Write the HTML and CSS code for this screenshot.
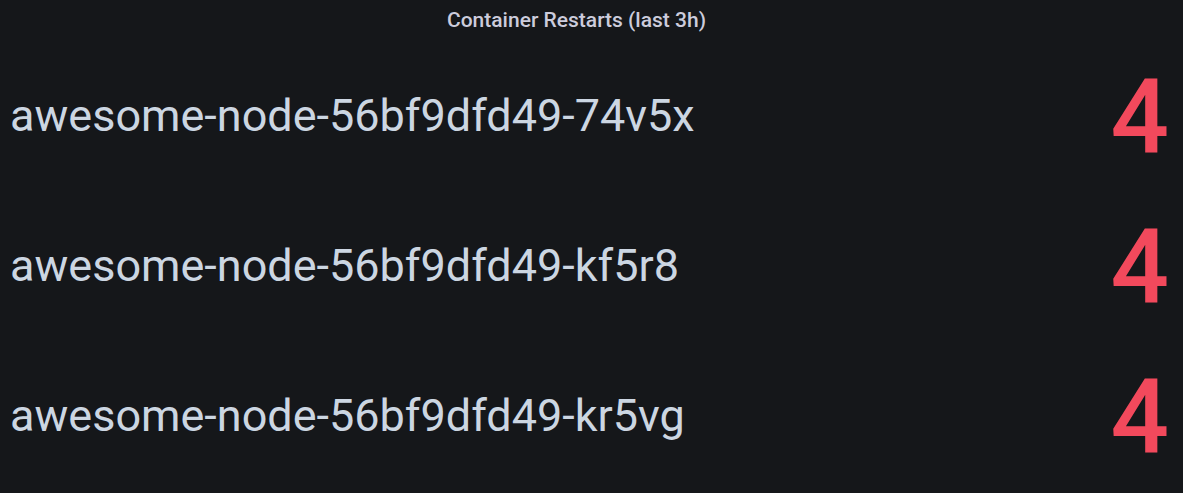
FILE: index.html
```html
<!DOCTYPE html>
<html>
<head>
<meta charset="utf-8">
<link rel="stylesheet" href="styles.css">
</head>
<body>
<div class="panel">
  <div class="panel-header">Container Restarts (last 3h)</div>
  <div class="stats">
    <div class="stat"><span class="stat-name">awesome-node-56bf9dfd49-74v5x</span><span class="stat-value">4</span></div>
    <div class="stat"><span class="stat-name">awesome-node-56bf9dfd49-kf5r8</span><span class="stat-value">4</span></div>
    <div class="stat"><span class="stat-name">awesome-node-56bf9dfd49-kr5vg</span><span class="stat-value">4</span></div>
  </div>
</div>
</body>
</html>
```
FILE: styles.css
```css
html, body {
  margin: 0;
  padding: 0;
  background: #15171a;
}
.panel {
  width: 1183px;
  height: 493px;
  display: flex;
  flex-direction: column;
  font-family: Roboto, "Liberation Sans", sans-serif;
  color: #ccccdc;
}
.panel-header {
  height: 42px;
  display: flex;
  align-items: center;
  justify-content: center;
  font-size: 21px;
  font-weight: 500;
  padding: 0 30px 2px 0;
  box-sizing: border-box;
}
.stats {
  flex: 1;
  display: flex;
  flex-direction: column;
}
.stat {
  flex: 1;
  display: flex;
  align-items: center;
  justify-content: space-between;
  padding: 0 14px 0 10px;
}
.stat-name {
  font-size: 45px;
  color: #ccd6e2;
  margin-bottom: 4px;
}
.stat-value {
  font-size: 103px;
  font-weight: 500;
  color: #f2495c;
  line-height: 1;
}
```
